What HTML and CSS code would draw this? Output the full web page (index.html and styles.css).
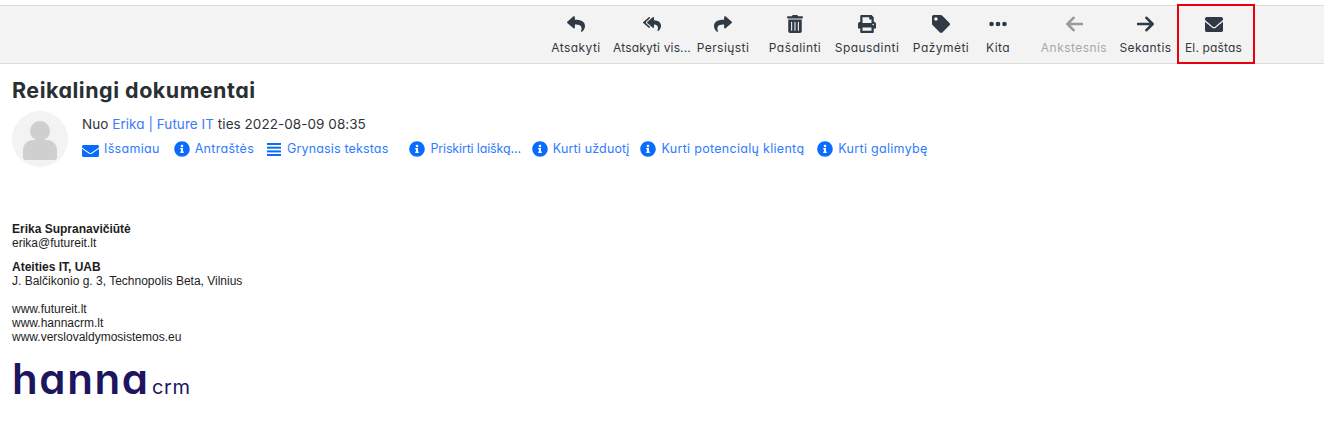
FILE: index.html
```html
<!DOCTYPE html>
<html lang="lt">
<head>
<meta charset="utf-8">
<title>Reikalingi dokumentai</title>
<link rel="stylesheet" href="styles.css">
</head>
<body>
<header class="toolbar">
  <a class="tool w76"><svg class="ti" viewBox="0 0 512 512"><path d="M8.309 189.836L184.313 37.851C199.719 24.546 224 35.347 224 56.015v80.053c160.629 1.839 288 34.032 288 186.258 0 61.441-39.581 122.309-83.333 154.132-13.653 9.931-33.111-2.533-28.077-18.631 45.344-145.012-21.507-183.51-176.59-185.742V360c0 20.7-24.3 31.453-39.687 18.164l-176.004-152c-11.071-9.562-11.086-26.753 0-36.328z"/></svg><span>Atsakyti</span></a>
  <a class="tool w76"><svg class="ti" viewBox="0 0 576 512"><path d="M136.309 189.836L312.313 37.851C327.72 24.546 352 35.348 352 56.015v82.763c129.182 10.231 224 52.212 224 183.548 0 61.441-39.582 122.309-83.333 154.132-13.653 9.931-33.111-2.533-28.077-18.631 38.512-123.162-3.922-169.482-112.59-182.015v84.175c0 20.701-24.3 31.453-39.687 18.164L136.309 226.164c-11.071-9.561-11.086-26.753 0-36.328zm-128 36.328L184.313 378.15C199.7 391.439 224 380.687 224 359.986v-15.818l-108.606-93.785A55.96 55.96 0 0 1 96 207.998a55.953 55.953 0 0 1 19.393-42.38L224 71.832V56.015c0-20.667-24.28-31.469-39.687-18.164L8.309 189.836c-11.086 9.575-11.071 26.767 0 36.328z"/></svg><span class="tight">Atsakyti vis...</span></a>
  <a class="tool w66"><svg class="ti" viewBox="0 0 512 512"><path d="M503.691 189.836L327.687 37.851C312.281 24.546 288 35.347 288 56.015v80.053C127.371 137.907 0 170.1 0 322.326c0 61.441 39.581 122.309 83.333 154.132 13.653 9.931 33.111-2.533 28.077-18.631C66.066 312.814 132.917 274.316 288 272.085V360c0 20.7 24.3 31.453 39.687 18.164l176.004-152c11.071-9.562 11.086-26.753 0-36.328z"/></svg><span>Persiųsti</span></a>
  <a class="tool w78"><svg class="ti" viewBox="0 0 448 512"><path d="M32 464a48 48 0 0 0 48 48h288a48 48 0 0 0 48-48V128H32zm272-256a16 16 0 0 1 32 0v224a16 16 0 0 1-32 0zm-96 0a16 16 0 0 1 32 0v224a16 16 0 0 1-32 0zm-96 0a16 16 0 0 1 32 0v224a16 16 0 0 1-32 0zM432 32H312l-9.4-18.7A24 24 0 0 0 281.1 0H166.8a23.72 23.72 0 0 0-21.4 13.3L136 32H16A16 16 0 0 0 0 48v32a16 16 0 0 0 16 16h416a16 16 0 0 0 16-16V48a16 16 0 0 0-16-16z"/></svg><span>Pašalinti</span></a>
  <a class="tool w66"><svg class="ti" viewBox="0 0 512 512"><path d="M448 192V77.25c0-8.49-3.37-16.62-9.37-22.63L393.37 9.37c-6-6-14.14-9.37-22.63-9.37H96C78.33 0 64 14.33 64 32v160c-35.35 0-64 28.65-64 64v112c0 8.84 7.16 16 16 16h48v96c0 17.67 14.33 32 32 32h320c17.67 0 32-14.33 32-32v-96h48c8.84 0 16-7.16 16-16V256c0-35.35-28.65-64-64-64zm-64 256H128v-96h256v96zm0-224H128V64h192v48c0 8.84 7.16 16 16 16h48v96zm48 72c-13.25 0-24-10.75-24-24 0-13.26 10.75-24 24-24s24 10.74 24 24c0 13.25-10.75 24-24 24z"/></svg><span>Spausdinti</span></a>
  <a class="tool w82"><svg class="ti" viewBox="0 0 512 512"><path d="M0 252.118V48C0 21.49 21.49 0 48 0h204.118a48 48 0 0 1 33.941 14.059l211.882 211.882c18.745 18.745 18.745 49.137 0 67.882L293.823 497.941c-18.745 18.745-49.137 18.745-67.882 0L14.059 286.059A48 48 0 0 1 0 252.118zM112 64c-26.51 0-48 21.49-48 48s21.49 48 48 48 48-21.49 48-48-21.49-48-48-48z"/></svg><span>Pažymėti</span></a>
  <a class="tool w32"><svg class="ti" viewBox="0 0 512 512"><circle cx="72" cy="256" r="66"/><circle cx="256" cy="256" r="66"/><circle cx="440" cy="256" r="66"/></svg><span>Kita</span></a>
  <a class="tool w76 disabled prev"><svg class="ti arrow" viewBox="0 0 18 18"><path d="M17 9H2.500M8.500 2.800L2.400 9l6.100 6.200"/></svg><span>Ankstesnis</span></a>
  <a class="tool w65 next"><svg class="ti arrow" viewBox="0 0 18 18"><path d="M1 9h14.500M9.500 2.800L15.600 9l-6.100 6.200"/></svg><span>Sekantis</span></a>
  <a class="tool active"><svg class="ti env" viewBox="0 64 512 384" preserveAspectRatio="none"><path d="M502.3 190.8c3.9-3.1 9.7-.2 9.7 4.7V400c0 26.5-21.5 48-48 48H48c-26.5 0-48-21.5-48-48V195.6c0-5 5.7-7.8 9.7-4.7 22.4 17.4 52.1 39.5 154.1 113.6 21.1 15.4 56.7 47.8 92.2 47.6 35.7.3 72-32.8 92.3-47.6 102-74.1 131.6-96.3 154-113.7zM256 320c23.2.4 56.6-29.2 73.4-41.4 132.7-96.3 142.8-104.7 173.4-128.7 5.8-4.5 9.2-11.5 9.2-18.9v-19c0-26.5-21.5-48-48-48H48C21.5 64 0 85.5 0 112v19c0 7.4 3.4 14.3 9.2 18.9 30.6 23.9 40.7 32.4 173.4 128.7 16.8 12.2 50.2 41.8 73.4 41.4z"/></svg><span>El. paštas</span></a>
</header>

<main class="message">
  <h1 class="subject">Reikalingi dokumentai</h1>
  <section class="head">
    <div class="avatar"><svg viewBox="0 0 56 56"><circle cx="28" cy="20" r="10"/><path d="M11 46V39c0-6 5-10 10-10h14c5 0 10 4 10 10v7c0 2-1 3-3 3H14c-2 0-3-1-3-3z"/></svg></div>
    <div class="meta">
      <p class="from">Nuo <a>Erika | Future IT</a> ties 2022-08-09 08:35</p>
      <nav class="links">
        <a class="link m14"><svg class="li wide" viewBox="0 64 512 384" preserveAspectRatio="none"><path d="M502.3 190.8c3.9-3.1 9.7-.2 9.7 4.7V400c0 26.5-21.5 48-48 48H48c-26.5 0-48-21.5-48-48V195.6c0-5 5.7-7.8 9.7-4.7 22.4 17.4 52.1 39.5 154.1 113.6 21.1 15.4 56.7 47.8 92.2 47.6 35.7.3 72-32.8 92.3-47.6 102-74.1 131.6-96.3 154-113.7zM256 320c23.2.4 56.6-29.2 73.4-41.4 132.7-96.3 142.8-104.7 173.4-128.7 5.8-4.5 9.2-11.5 9.2-18.9v-19c0-26.5-21.5-48-48-48H48C21.5 64 0 85.5 0 112v19c0 7.4 3.4 14.3 9.2 18.9 30.6 23.9 40.7 32.4 173.4 128.7 16.8 12.2 50.2 41.8 73.4 41.4z"/></svg>Išsamiau</a>
        <a class="link m13"><svg class="li" viewBox="0 0 512 512"><path d="M256 8C119.043 8 8 119.083 8 256c0 136.997 111.043 248 248 248s248-111.003 248-248C504 119.083 392.957 8 256 8zm0 110c23.196 0 42 18.804 42 42s-18.804 42-42 42-42-18.804-42-42 18.804-42 42-42zm56 254c0 6.627-5.373 12-12 12h-88c-6.627 0-12-5.373-12-12v-24c0-6.627 5.373-12 12-12h12v-64h-12c-6.627 0-12-5.373-12-12v-24c0-6.627 5.373-12 12-12h64c6.627 0 12 5.373 12 12v100h12c6.627 0 12 5.373 12 12v24z"/></svg>Antraštės</a>
        <a class="link m21 narrow"><svg class="li bars" viewBox="0 0 14 14"><rect y="1" width="14" height="2"/><rect y="4.7" width="14" height="2"/><rect y="8.4" width="14" height="2"/><rect y="12" width="14" height="2"/></svg>Grynasis tekstas</a>
        <a class="link tight"><svg class="li" viewBox="0 0 512 512"><path d="M256 8C119.043 8 8 119.083 8 256c0 136.997 111.043 248 248 248s248-111.003 248-248C504 119.083 392.957 8 256 8zm0 110c23.196 0 42 18.804 42 42s-18.804 42-42 42-42-18.804-42-42 18.804-42 42-42zm56 254c0 6.627-5.373 12-12 12h-88c-6.627 0-12-5.373-12-12v-24c0-6.627 5.373-12 12-12h12v-64h-12c-6.627 0-12-5.373-12-12v-24c0-6.627 5.373-12 12-12h64c6.627 0 12 5.373 12 12v100h12c6.627 0 12 5.373 12 12v24z"/></svg>Priskirti laišką...</a>
        <a class="link narrow"><svg class="li" viewBox="0 0 512 512"><path d="M256 8C119.043 8 8 119.083 8 256c0 136.997 111.043 248 248 248s248-111.003 248-248C504 119.083 392.957 8 256 8zm0 110c23.196 0 42 18.804 42 42s-18.804 42-42 42-42-18.804-42-42 18.804-42 42-42zm56 254c0 6.627-5.373 12-12 12h-88c-6.627 0-12-5.373-12-12v-24c0-6.627 5.373-12 12-12h12v-64h-12c-6.627 0-12-5.373-12-12v-24c0-6.627 5.373-12 12-12h64c6.627 0 12 5.373 12 12v100h12c6.627 0 12 5.373 12 12v24z"/></svg>Kurti užduotį</a>
        <a class="link m13"><svg class="li" viewBox="0 0 512 512"><path d="M256 8C119.043 8 8 119.083 8 256c0 136.997 111.043 248 248 248s248-111.003 248-248C504 119.083 392.957 8 256 8zm0 110c23.196 0 42 18.804 42 42s-18.804 42-42 42-42-18.804-42-42 18.804-42 42-42zm56 254c0 6.627-5.373 12-12 12h-88c-6.627 0-12-5.373-12-12v-24c0-6.627 5.373-12 12-12h12v-64h-12c-6.627 0-12-5.373-12-12v-24c0-6.627 5.373-12 12-12h64c6.627 0 12 5.373 12 12v100h12c6.627 0 12 5.373 12 12v24z"/></svg>Kurti potencialų klientą</a>
        <a class="link"><svg class="li" viewBox="0 0 512 512"><path d="M256 8C119.043 8 8 119.083 8 256c0 136.997 111.043 248 248 248s248-111.003 248-248C504 119.083 392.957 8 256 8zm0 110c23.196 0 42 18.804 42 42s-18.804 42-42 42-42-18.804-42-42 18.804-42 42-42zm56 254c0 6.627-5.373 12-12 12h-88c-6.627 0-12-5.373-12-12v-24c0-6.627 5.373-12 12-12h12v-64h-12c-6.627 0-12-5.373-12-12v-24c0-6.627 5.373-12 12-12h64c6.627 0 12 5.373 12 12v100h12c6.627 0 12 5.373 12 12v24z"/></svg>Kurti galimybę</a>
      </nav>
    </div>
  </section>
  <section class="signature">
    <p><b>Erika Supranavičiūtė</b><br>erika@futureit.lt</p>
    <p><b>Ateities IT, UAB</b><br>J. Balčikonio g. 3, Technopolis Beta, Vilnius</p>
    <p class="sites">www.futureit.lt<br>www.hannacrm.lt<br>www.verslovaldymosistemos.eu</p>
    <div class="logo"><span class="brand">hanna</span><span class="crm">crm</span></div>
  </section>
</main>
</body>
</html>
```
FILE: styles.css
```css
* { box-sizing: border-box; }
html, body { margin: 0; padding: 0; background: #fff; }
body { font-family: Inter, "Noto Sans", sans-serif; font-feature-settings: "cv11"; color: #2f3338; height: 434px; overflow: hidden; }
p { margin: 0; }

.toolbar {
  margin-top: 5px;
  height: 59px;
  display: flex;
  justify-content: flex-end;
  padding-right: 69px;
  background: #f3f3f3;
  border-top: 1px solid #ddd;
  border-bottom: 1px solid #ddd;
}
.tool {
  display: flex;
  flex-direction: column;
  align-items: center;
  padding-top: 9px;
  white-space: nowrap;
  font-size: 12px;
  letter-spacing: 0.45px;
  line-height: 18px;
  color: #33383d;
}
.tool span { margin-top: 6px; }
.tool .tight { letter-spacing: 0.15px; }
.ti { width: 18px; height: 18px; fill: #2f3a45; display: block; }
.ti.arrow { fill: none; stroke: #2f3a45; stroke-width: 2.6; stroke-linecap: round; stroke-linejoin: round; }
.w32 { width: 32px; } .w65 { width: 65px; } .w66 { width: 66px; }
.w76 { width: 76px; } .w78 { width: 78px; } .w82 { width: 82px; }
.prev { margin-left: 22px; }
.next { padding-left: 2px; }
.disabled { color: #a8a8a8; }
.disabled .ti.arrow { stroke: #9a9a9a; }
.active {
  width: 78px;
  margin: -2px 0 -1px;
  padding: 11px 5px 0 0;
  border: 2px solid #e8000d;
  letter-spacing: 0.15px;
}
.active .env { height: 15px; }
.active span { margin-top: 7px; }

.message { padding: 0 12px; }
.subject { margin: 12px 0 0; font-size: 21.5px; letter-spacing: 0.5px; line-height: 28px; font-weight: 700; color: #2a2f33; }
.head { display: flex; gap: 14px; margin-top: 7px; }
.avatar { width: 56px; height: 56px; border-radius: 50%; background: #f3f3f3; flex: none; }
.avatar svg { display: block; width: 56px; height: 56px; fill: #cfcfcf; }
.from { font-size: 13.5px; letter-spacing: 0.05px; line-height: 20px; color: #2f3338; margin-top: 3px; }
.from a { color: #3d7bf5; }
.links { display: flex; margin-top: 6px; font-size: 12.5px; letter-spacing: 0.3px; line-height: 18px; color: #2f7bff; }
.link { display: flex; align-items: center; gap: 5px; margin-right: 11px; white-space: nowrap; }
.link.tight { letter-spacing: -0.15px; }
.link.narrow { letter-spacing: 0.15px; }
.m13 { margin-right: 13px; }
.m14 { margin-right: 14px; }
.m21 { margin-right: 21px; }
.li { width: 16px; height: 16px; fill: #0a6cff; flex: none; }
.li.wide { width: 17px; height: 12px; margin-top: 3px; }
.li.bars { width: 14px; height: 14px; margin-right: 1px; }

.signature { margin-top: 55px; font-family: "Liberation Sans", Arial, sans-serif; font-size: 12px; line-height: 14px; color: #1d1d1d; }
.signature p { margin-bottom: 10px; }
.signature .sites { margin-top: 14px; margin-bottom: 0; }
.logo { margin-top: 17px; display: flex; align-items: baseline; color: #1d1560; font-family: Inter, sans-serif; font-feature-settings: "cv11"; line-height: 36px; }
.brand { font-size: 42px; font-weight: 600; letter-spacing: 1.6px; }
.crm { font-size: 20px; margin-left: 2.5px; letter-spacing: 0.6px; }
```
